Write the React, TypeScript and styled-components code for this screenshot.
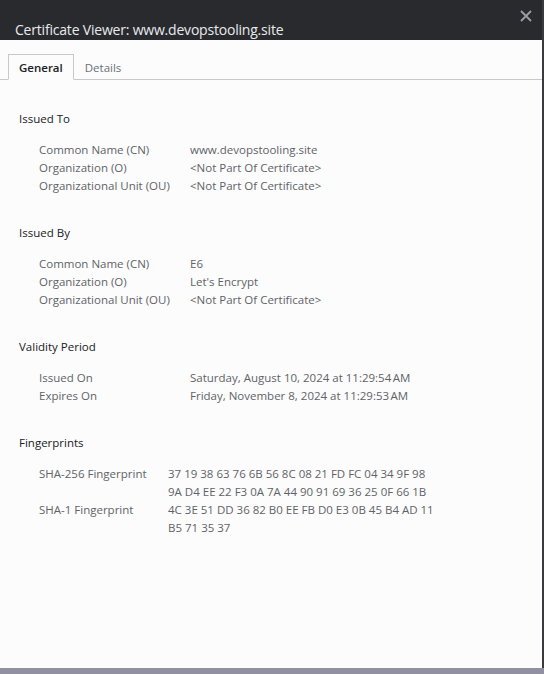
import React from "react";
import styled, { createGlobalStyle } from "styled-components";

const Global = createGlobalStyle`
  html, body { margin: 0; padding: 0; }
  body {
    background: #7c7c8c;
    font-family: "Open Sans", "Noto Sans", sans-serif;
  }
`;

const Page = styled.div`
  width: 544px;
  height: 674px;
  background: linear-gradient(#5a5a66, #8a8a9a 3px, #9090a0);
  display: flex;
  align-items: flex-start;
`;

const Dialog = styled.div`
  width: 542px;
  height: 668px;
  background: #fcfcfc;
  border-right: 2px solid #3a3b3f;
  display: flex;
  flex-direction: column;
`;

const TitleBar = styled.div`
  height: 40px;
  background: #292a2d;
  display: grid;
  grid-template-columns: 1fr auto;
  padding: 0 10px 0 15px;
  box-sizing: border-box;
`;

const Title = styled.div`
  align-self: end;
  color: #e8eaed;
  font-size: 14px;
  letter-spacing: -0.2px;
  line-height: 20px;
  padding-bottom: 0;
`;

const Close = styled.button`
  align-self: start;
  margin-top: 10px;
  width: 12px;
  height: 12px;
  padding: 0;
  border: none;
  background: none;
  display: flex;
`;

const Tabs = styled.div`
  margin-top: 14px;
  display: flex;
  align-items: flex-end;
  padding-left: 8px;
  border-bottom: 1px solid #c8c8c8;
  height: 25px;
`;

const Tab = styled.div<{ $active?: boolean }>`
  height: 26px;
  box-sizing: border-box;
  padding: 1px ${(p) => (p.$active ? "10px" : "8px")} 0 10px;
  margin-bottom: -1px;
  display: flex;
  align-items: center;
  font-size: 11.5px;
  color: ${(p) => (p.$active ? "#202124" : "#6b6f74")};
  font-weight: ${(p) => (p.$active ? 600 : 400)};
  background: ${(p) => (p.$active ? "#fcfcfc" : "transparent")};
  border: 1px solid ${(p) => (p.$active ? "#c8c8c8" : "transparent")};
  border-bottom: ${(p) => (p.$active ? "1px solid #fcfcfc" : "1px solid transparent")};
`;

const Content = styled.div`
  padding: 30px 0 0 19px;
  display: flex;
  flex-direction: column;
  gap: 29px;
`;

const Section = styled.section`
  display: flex;
  flex-direction: column;
  gap: 13px;
`;

const SectionTitle = styled.div`
  font-size: 11.5px;
  line-height: 18px;
  color: #202124;
`;

const Rows = styled.div<{ $labelWidth: number }>`
  display: grid;
  grid-template-columns: ${(p) => p.$labelWidth}px 1fr;
  padding-left: 20px;
  font-size: 11.5px;
  line-height: 18px;
  color: #5f6368;
`;

const Label = styled.div``;

const Value = styled.div`
  white-space: pre-line;
`;

type Row = [string, string];

const sections: { title: string; labelWidth: number; rows: Row[] }[] = [
  {
    title: "Issued To",
    labelWidth: 151,
    rows: [
      ["Common Name (CN)", "www.devopstooling.site"],
      ["Organization (O)", "<Not Part Of Certificate>"],
      ["Organizational Unit (OU)", "<Not Part Of Certificate>"],
    ],
  },
  {
    title: "Issued By",
    labelWidth: 151,
    rows: [
      ["Common Name (CN)", "E6"],
      ["Organization (O)", "Let's Encrypt"],
      ["Organizational Unit (OU)", "<Not Part Of Certificate>"],
    ],
  },
  {
    title: "Validity Period",
    labelWidth: 151,
    rows: [
      ["Issued On", "Saturday, August 10, 2024 at 11:29:54\u202FAM"],
      ["Expires On", "Friday, November 8, 2024 at 11:29:53\u202FAM"],
    ],
  },
  {
    title: "Fingerprints",
    labelWidth: 129,
    rows: [
      [
        "SHA-256 Fingerprint",
        "37 19 38 63 76 6B 56 8C 08 21 FD FC 04 34 9F 98\n9A D4 EE 22 F3 0A 7A 44 90 91 69 36 25 0F 66 1B",
      ],
      ["SHA-1 Fingerprint", "4C 3E 51 DD 36 82 B0 EE FB D0 E3 0B 45 B4 AD 11\nB5 71 35 37"],
    ],
  },
];

export default function App() {
  return (
    <>
      <Global />
      <Page>
        <Dialog>
          <TitleBar>
            <Title>Certificate Viewer: www.devopstooling.site</Title>
            <Close aria-label="Close">
              <svg width="12" height="12" viewBox="0 0 12 12">
                <path d="M1 1 L11 11 M11 1 L1 11" stroke="#9aa0a6" strokeWidth="1.8" />
              </svg>
            </Close>
          </TitleBar>
          <Tabs>
            <Tab $active>General</Tab>
            <Tab>Details</Tab>
          </Tabs>
          <Content>
            {sections.map((s) => (
              <Section key={s.title}>
                <SectionTitle>{s.title}</SectionTitle>
                <Rows $labelWidth={s.labelWidth}>
                  {s.rows.map(([l, v]) => (
                    <React.Fragment key={l}>
                      <Label>{l}</Label>
                      <Value>{v}</Value>
                    </React.Fragment>
                  ))}
                </Rows>
              </Section>
            ))}
          </Content>
        </Dialog>
      </Page>
    </>
  );
}
